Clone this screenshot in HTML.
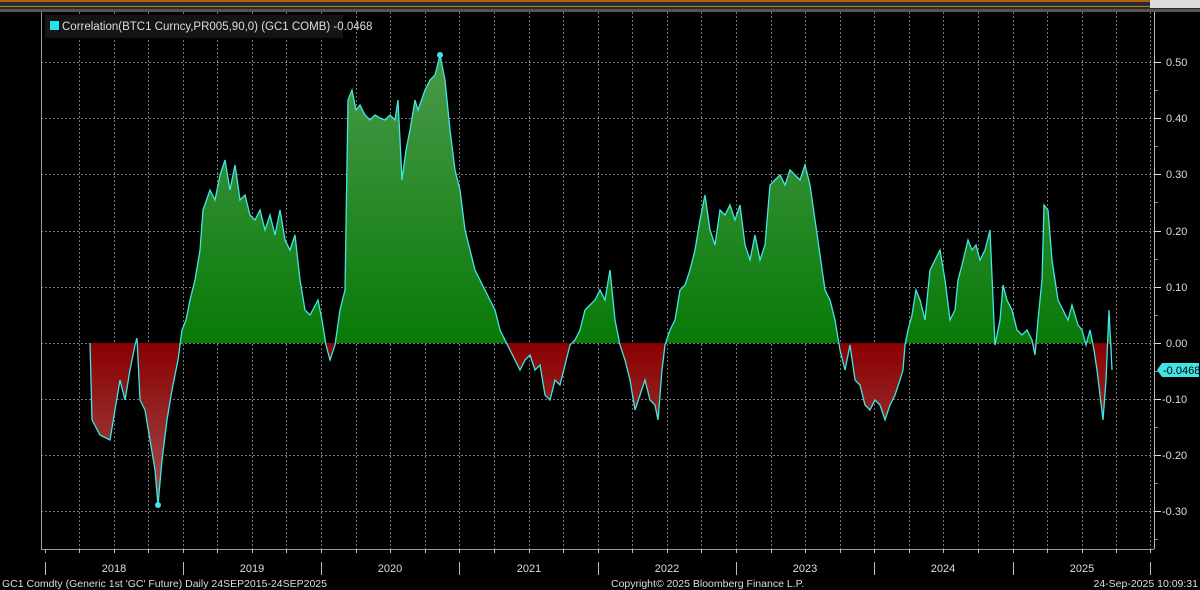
<!DOCTYPE html>
<html><head><meta charset="utf-8"><style>
html,body{margin:0;padding:0;background:#000;width:1200px;height:590px;overflow:hidden;font-family:"Liberation Sans",sans-serif}
</style></head><body>
<svg width="1200" height="590" xmlns="http://www.w3.org/2000/svg" xmlns:xlink="http://www.w3.org/1999/xlink" style="position:absolute;left:0;top:0">
<defs>
<linearGradient id="g" x1="0" y1="55" x2="0" y2="343" gradientUnits="userSpaceOnUse">
<stop offset="0" stop-color="#4a9a4a"/><stop offset="1" stop-color="#087a08"/></linearGradient>
<linearGradient id="r" x1="0" y1="343" x2="0" y2="505" gradientUnits="userSpaceOnUse">
<stop offset="0" stop-color="#8a0000"/><stop offset="1" stop-color="#a05050"/></linearGradient>
<clipPath id="up"><rect x="0" y="0" width="1200" height="343"/></clipPath>
<clipPath id="dn"><rect x="0" y="343" width="1200" height="250"/></clipPath>
<polygon id="area" points="90,343 92,420 100,435 110,440 115,410 120,380 125,400 130,370 135,345 137,338 140,400 145,410 150,440 155,470 158,505 162,460 167,420 172,390 178,360 182,330 186,320 190,300 195,280 200,250 203,210 210,190 215,200 220,175 225,160 230,190 235,165 240,200 245,195 250,215 255,220 260,210 265,230 270,215 275,235 280,210 285,240 290,250 295,235 300,280 305,310 310,315 318,300 322,320 326,345 330,360 335,345 340,310 345,290 348,100 352,90 356,110 360,105 365,115 370,120 375,115 380,118 385,120 390,115 395,120 398,100 402,180 406,150 410,130 415,100 418,110 425,90 430,80 435,75 440,55 445,80 450,130 455,170 460,190 465,230 470,250 475,270 480,280 485,290 490,300 495,310 500,330 505,340 510,350 515,360 520,370 525,360 530,355 535,370 540,365 545,395 550,400 555,380 560,385 565,365 570,345 575,340 580,330 585,310 590,305 595,300 600,290 605,300 610,270 615,320 620,345 625,360 630,380 635,410 640,395 645,380 650,400 655,405 658,420 662,370 665,345 670,330 675,320 680,290 685,285 690,270 695,250 700,220 705,195 710,230 715,245 720,210 725,215 730,205 735,220 740,205 745,245 750,260 755,235 760,260 765,245 770,185 775,180 780,175 785,185 790,170 795,175 800,180 805,165 810,185 815,220 820,255 825,290 830,300 835,320 840,350 845,370 850,345 855,380 860,385 865,405 870,410 875,400 880,405 885,420 890,405 895,395 900,380 903,370 905,345 908,330 912,315 916,290 920,300 925,320 930,270 935,260 940,250 945,280 950,320 955,310 958,280 962,265 968,240 972,250 976,245 980,260 985,250 990,230 995,345 1000,320 1003,285 1007,300 1012,310 1017,330 1022,335 1027,330 1032,340 1035,355 1038,320 1042,280 1044,205 1048,210 1052,260 1058,300 1063,310 1068,320 1072,305 1078,325 1082,330 1086,345 1090,330 1094,350 1097,370 1100,395 1103,420 1106,380 1109,310 1112,370 1112,343"/>
</defs>
<rect x="0" y="0" width="1200" height="12" fill="#2a2a2a"/>
<rect x="0" y="0" width="1200" height="2" fill="#b0601a"/>
<rect x="0" y="6" width="1200" height="1" fill="#b08a20"/>
<rect x="0" y="9" width="1200" height="3" fill="#555"/>
<rect x="1150" y="0" width="50" height="8" fill="#ddd"/>
<g stroke="#777" stroke-width="1" stroke-dasharray="2,2" fill="none">
<path d="M79.5 12V549M114.5 12V549M148.5 12V549M183.5 12V549M217.5 12V549M252.5 12V549M286.5 12V549M321.5 12V549M356.5 12V549M390.5 12V549M425.5 12V549M459.5 12V549M494.5 12V549M529.5 12V549M563.5 12V549M598.5 12V549M632.5 12V549M667.5 12V549M701.5 12V549M736.5 12V549M771.5 12V549M805.5 12V549M840.5 12V549M874.5 12V549M909.5 12V549M943.5 12V549M978.5 12V549M1013.5 12V549M1047.5 12V549M1082.5 12V549M1116.5 12V549M1150.5 12V549"/>
<path d="M41 62.5H1154M41 118.5H1154M41 174.5H1154M41 231.5H1154M41 287.5H1154M41 343.5H1154M41 399.5H1154M41 455.5H1154M41 511.5H1154"/>
</g>
<line x1="41.5" y1="12" x2="41.5" y2="549" stroke="#999"/>
<line x1="41" y1="549.5" x2="1154" y2="549.5" stroke="#999"/>
<line x1="1154.5" y1="12" x2="1154.5" y2="549" stroke="#bbb"/>
<use href="#area" xlink:href="#area" fill="url(#g)" clip-path="url(#up)"/>
<use href="#area" xlink:href="#area" fill="url(#r)" clip-path="url(#dn)"/>
<polyline points="90,343 92,420 100,435 110,440 115,410 120,380 125,400 130,370 135,345 137,338 140,400 145,410 150,440 155,470 158,505 162,460 167,420 172,390 178,360 182,330 186,320 190,300 195,280 200,250 203,210 210,190 215,200 220,175 225,160 230,190 235,165 240,200 245,195 250,215 255,220 260,210 265,230 270,215 275,235 280,210 285,240 290,250 295,235 300,280 305,310 310,315 318,300 322,320 326,345 330,360 335,345 340,310 345,290 348,100 352,90 356,110 360,105 365,115 370,120 375,115 380,118 385,120 390,115 395,120 398,100 402,180 406,150 410,130 415,100 418,110 425,90 430,80 435,75 440,55 445,80 450,130 455,170 460,190 465,230 470,250 475,270 480,280 485,290 490,300 495,310 500,330 505,340 510,350 515,360 520,370 525,360 530,355 535,370 540,365 545,395 550,400 555,380 560,385 565,365 570,345 575,340 580,330 585,310 590,305 595,300 600,290 605,300 610,270 615,320 620,345 625,360 630,380 635,410 640,395 645,380 650,400 655,405 658,420 662,370 665,345 670,330 675,320 680,290 685,285 690,270 695,250 700,220 705,195 710,230 715,245 720,210 725,215 730,205 735,220 740,205 745,245 750,260 755,235 760,260 765,245 770,185 775,180 780,175 785,185 790,170 795,175 800,180 805,165 810,185 815,220 820,255 825,290 830,300 835,320 840,350 845,370 850,345 855,380 860,385 865,405 870,410 875,400 880,405 885,420 890,405 895,395 900,380 903,370 905,345 908,330 912,315 916,290 920,300 925,320 930,270 935,260 940,250 945,280 950,320 955,310 958,280 962,265 968,240 972,250 976,245 980,260 985,250 990,230 995,345 1000,320 1003,285 1007,300 1012,310 1017,330 1022,335 1027,330 1032,340 1035,355 1038,320 1042,280 1044,205 1048,210 1052,260 1058,300 1063,310 1068,320 1072,305 1078,325 1082,330 1086,345 1090,330 1094,350 1097,370 1100,395 1103,420 1106,380 1109,310 1112,370" fill="none" stroke="#40e6e6" stroke-width="1.3"/>
<circle cx="440" cy="55" r="3" fill="#40e6e6"/>
<circle cx="158" cy="505" r="3" fill="#40e6e6"/>
<g fill="#ddd" font-size="11">
<text x="1166" y="66">0.50</text><text x="1166" y="122">0.40</text><text x="1166" y="178">0.30</text><text x="1166" y="235">0.20</text><text x="1166" y="291">0.10</text><text x="1166" y="347">0.00</text><text x="1162" y="403">-0.10</text><text x="1162" y="459">-0.20</text><text x="1162" y="515">-0.30</text>
</g>
<g stroke="#ddd"><path d="M1155 62.5h6M1155 118.5h6M1155 174.5h6M1155 231.5h6M1155 287.5h6M1155 343.5h6M1155 399.5h6M1155 455.5h6M1155 511.5h6"/>
<path d="M1155 90.5h3M1155 146.5h3M1155 202.5h3M1155 259.5h3M1155 315.5h3M1155 371.5h3M1155 427.5h3M1155 483.5h3M1155 539.5h3" stroke="#888"/></g>
<path d="M1157 370l5-7h37v14h-37z" fill="#40e6e6"/>
<text x="1163" y="374" font-size="11" fill="#000">-0.0468</text>
<g stroke="#bbb"><path d="M45.5 549v4M79.5 549v4M114.5 549v4M148.5 549v4M183.5 549v4M217.5 549v4M252.5 549v4M286.5 549v4M321.5 549v4M356.5 549v4M390.5 549v4M425.5 549v4M459.5 549v4M494.5 549v4M529.5 549v4M563.5 549v4M598.5 549v4M632.5 549v4M667.5 549v4M701.5 549v4M736.5 549v4M771.5 549v4M805.5 549v4M840.5 549v4M874.5 549v4M909.5 549v4M943.5 549v4M978.5 549v4M1013.5 549v4M1047.5 549v4M1082.5 549v4M1116.5 549v4M1150.5 549v4"/>
<path d="M45.5 562v13M183.5 562v13M321.5 562v13M459.5 562v13M598.5 562v13M736.5 562v13M874.5 562v13M1013.5 562v13M1150.5 562v13"/></g>
<g fill="#ddd" font-size="11" text-anchor="middle">
<text x="114" y="572">2018</text><text x="252" y="572">2019</text><text x="390" y="572">2020</text><text x="529" y="572">2021</text><text x="667" y="572">2022</text><text x="805" y="572">2023</text><text x="943" y="572">2024</text><text x="1082" y="572">2025</text>
</g>
<g fill="#ddd" font-size="10.5">
<text x="2" y="587">GC1 Comdty (Generic 1st 'GC' Future)  Daily 24SEP2015-24SEP2025</text>
<text x="611" y="587">Copyright© 2025 Bloomberg Finance L.P.</text>
<text x="1198" y="587" text-anchor="end">24-Sep-2025 10:09:31</text>
</g>
<rect x="45" y="15" width="298" height="23" fill="#141414"/>
<rect x="50" y="21" width="9" height="9" fill="#20e8e8"/>
<text x="62" y="30" font-size="11.5" fill="#ddd">Correlation(BTC1 Curncy,PR005,90,0) (GC1 COMB) -0.0468</text>
</svg>
</body></html>
